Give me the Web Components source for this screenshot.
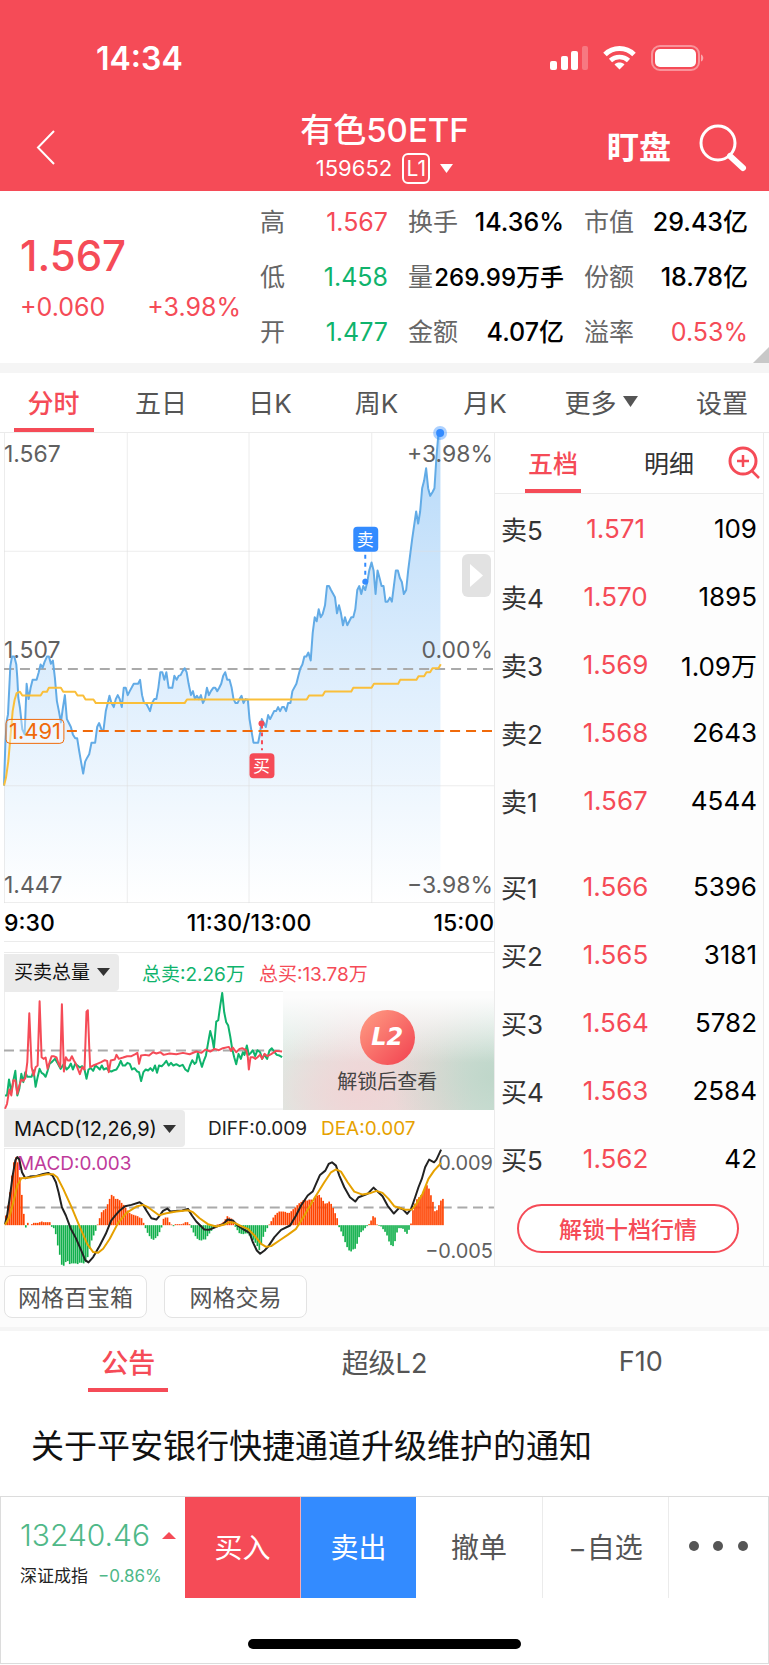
<!DOCTYPE html>
<html lang="zh-CN">
<head>
<meta charset="UTF-8">
<meta name="viewport" content="width=device-width, initial-scale=1.0">
<title>有色50ETF 159652</title>
<style>
    :root {
        --red: #f54b57;
        --green: #0fb36c;
        --blue: #338bff;
        --orange: #f06a0a;
        --line: #ebebeb;
        --gray: #555555;
        --text: #111111;
    }
    body {
        margin: 0;
        background: #ffffff;
        color: var(--text);
        font-family: Inter, "Noto Sans CJK SC", sans-serif;
    }
</style>
</head>
<body>
<stock-page></stock-page>

<script>
// Shared reset for every shadow root
const BASE = `
    * { box-sizing: border-box; }
    :host { display: block; }
    button { font: inherit; color: inherit; background: none; border: 0; padding: 0; margin: 0; cursor: pointer; white-space: nowrap; }
    a { color: inherit; text-decoration: none; }
    svg { display: block; }
`;

class BaseElement extends HTMLElement {
    connectedCallback() {
        if (this.shadowRoot) return;
        this.attachShadow({ mode: 'open' });
        this.shadowRoot.innerHTML = `<style>${BASE}${this.styles()}</style>${this.markup()}`;
    }
    styles() { return ''; }
    markup() { return '<slot></slot>'; }
}

/* ---------- status bar ---------- */
class StatusBar extends BaseElement {
    styles() {
        return `
            :host { display: flex; justify-content: space-between; align-items: center; height: 116px; padding: 0 65px 0 96px; }
            .time { font-size: 32px; font-weight: 600; }
            .icons { display: flex; align-items: center; gap: 15px; }
        `;
    }
    markup() {
        return `
            <span class="time">14:34</span>
            <div class="icons">
                <svg width="38" height="24" viewBox="0 0 38 24" fill="#fff" aria-hidden="true">
                    <rect x="0" y="15" width="7" height="9" rx="2"/>
                    <rect x="11" y="10" width="7" height="14" rx="2"/>
                    <rect x="21" y="5" width="7" height="19" rx="2"/>
                    <rect x="32" y="0" width="6" height="24" rx="2" opacity=".25"/>
                </svg>
                <svg width="33" height="24" viewBox="0 0 33 24" fill="none" stroke="#fff" aria-hidden="true">
                    <path d="M2 8.500C10 .6 23 .6 31 8.500" stroke-width="5"/>
                    <path d="M7.500 14.500C12.500 9.800 20.500 9.800 25.500 14.500" stroke-width="4.600"/>
                    <path d="M16.500 23.500L11.500 18.500C14.300 15.900 18.700 15.900 21.500 18.500Z" fill="#fff" stroke="none"/>
                </svg>
                <svg width="53" height="26" viewBox="0 0 53 26" aria-hidden="true">
                    <rect x="1" y="1" width="47" height="24" rx="8" fill="none" stroke="#fff" stroke-width="2" opacity=".4"/>
                    <rect x="4" y="4" width="41" height="18" rx="5" fill="#fff"/>
                    <path d="M50 9.500c3 1 3 6 0 7z" fill="#fff" opacity=".5"/>
                </svg>
            </div>
        `;
    }
}
customElements.define('status-bar', StatusBar);

/* ---------- title bar ---------- */
class TitleBar extends BaseElement {
    styles() {
        return `
            :host { display: grid; grid-template-columns: 1fr auto 1fr; height: 75px; padding: 0 22px; }
            .back { justify-self: start; align-self: start; padding: 14px; }
            .mid { text-align: center; }
            h1 { margin: -2px 0 0; font-size: 33px; line-height: 32px; font-weight: 500; }
            .code { display: flex; align-items: center; justify-content: center; gap: 10px; font-size: 22px; line-height: 32px; margin-top: 6px; }
            .level { border: 2px solid #fff; border-radius: 6px; width: 28px; height: 31px; line-height: 28px; font-size: 21px; }
            .tools { justify-self: end; display: flex; gap: 28px; align-items: start; }
            .watch { font-size: 32px; line-height: 32px; font-weight: 700; margin-top: 16px; }
            .find { margin-top: 8px; }
        `;
    }
    markup() {
        return `
            <button class="back" aria-label="返回">
                <svg width="20" height="35" viewBox="0 0 20 35" fill="none" stroke="#fff" stroke-width="2"><path d="M18 1L2 17.500L18 34"/></svg>
            </button>
            <div class="mid">
                <h1>有色50ETF</h1>
                <div class="code">
                    <span>159652</span><span class="level">L1</span>
                    <svg width="13" height="9" viewBox="0 0 13 9" fill="#fff" aria-hidden="true"><path d="M0 0h13L6.500 9z"/></svg>
                </div>
            </div>
            <div class="tools">
                <button class="watch">盯盘</button>
                <button class="find" aria-label="搜索">
                    <svg width="48" height="48" viewBox="0 0 48 48" fill="none" stroke="#fff">
                        <circle cx="19" cy="19" r="17" stroke-width="3"/>
                        <path d="M31 32L44 44" stroke-width="6" stroke-linecap="round"/>
                    </svg>
                </button>
            </div>
        `;
    }
}
customElements.define('title-bar', TitleBar);

/* ---------- quote summary ---------- */
class QuoteItem extends BaseElement {
    styles() {
        return `
            :host { display: flex; justify-content: space-between; align-items: center; white-space: nowrap; font-size: 25px; line-height: 55px; }
            .label { color: #666; }
            .value { font-weight: 500; color: #000; }
            :host([tone]) .value { font-weight: 400; }
            :host([tone="up"]) .value { color: var(--red); }
            :host([tone="down"]) .value { color: var(--green); }
            :host([compact]) .value { font-size: 24px; }
        `;
    }
    markup() {
        return `<span class="label">${this.getAttribute('label')}</span><span class="value"><slot></slot></span>`;
    }
}
customElements.define('quote-item', QuoteItem);

class QuotePanel extends BaseElement {
    styles() {
        return `
            :host { position: relative; display: grid; grid-template-columns: 221fr 488fr; column-gap: 19px; height: 172px; padding: 4px 21px 0 20px; color: var(--red); }
            .last { display: block; font-size: 42px; line-height: 48px; font-weight: 500; margin-top: 37px; }
            .diff { display: flex; justify-content: space-between; font-size: 25px; line-height: 30px; margin-top: 12px; }
            .items { display: grid; grid-template-columns: 128fr 156fr 164fr; column-gap: 20px; grid-template-rows: repeat(3, 55px); }
            .corner { position: absolute; right: 0; bottom: 0; border-style: solid; border-width: 0 0 16px 16px; border-color: transparent transparent #c8c8c8; }
        `;
    }
    markup() {
        return `
            <div>
                <strong class="last">1.567</strong>
                <div class="diff"><span>+0.060</span><span>+3.98%</span></div>
            </div>
            <div class="items">
                <quote-item label="高" tone="up">1.567</quote-item>
                <quote-item label="换手">14.36%</quote-item>
                <quote-item label="市值">29.43亿</quote-item>
                <quote-item label="低" tone="down">1.458</quote-item>
                <quote-item label="量" compact>269.99万手</quote-item>
                <quote-item label="份额">18.78亿</quote-item>
                <quote-item label="开" tone="down">1.477</quote-item>
                <quote-item label="金额">4.07亿</quote-item>
                <quote-item label="溢率" tone="up">0.53%</quote-item>
            </div>
            <i class="corner"></i>
        `;
    }
}
customElements.define('quote-panel', QuotePanel);

/* ---------- period tabs ---------- */
class PeriodTabs extends BaseElement {
    styles() {
        return `
            :host { display: grid; grid-template-columns: 107fr 108fr 110fr 103fr 114fr 118fr 109fr; height: 59px; font-size: 26px; color: var(--gray); }
            button { position: relative; height: 59px; padding-bottom: 2px; }
            .active { color: var(--red); font-weight: 500; }
            .active::after { content: ''; position: absolute; left: 14px; right: 13px; bottom: 0; height: 4px; background: var(--red); }
            .more { display: flex; align-items: center; justify-content: center; gap: 6px; }
            .last { text-align: right; padding-right: 21px; }
        `;
    }
    markup() {
        return `
            <button class="active">分时</button>
            <button>五日</button>
            <button>日K</button>
            <button>周K</button>
            <button>月K</button>
            <button class="more">更多<svg width="15" height="11" viewBox="0 0 15 11" fill="#555"><path d="M0 0h15L7.500 11z"/></svg></button>
            <button class="last">设置</button>
        `;
    }
}
customElements.define('period-tabs', PeriodTabs);

/* ---------- intraday price chart ---------- */
const PRICE = '12,1084 16,960 20,890 24,870 31,725 36,696 43,696 49,720 52,760 55,820 60,850 67,915 74,930 80,778 86,824 92,790 98,766 110,766 116,745 122,720 128,730 134,712 141,696 147,696 153,718 159,708 165,760 171,830 177,860 183,894 189,850 195,812 201,884 207,896 213,908 219,930 226,942 232,942 238,980 244,1015 250,1048 256,1012 262,1000 268,990 275,955 286,955 292,908 298,896 306,918 311,918 318,860 324,836 329,814 335,836 342,848 348,824 354,812 360,824 366,848 372,790 378,790 384,812 390,800 402,778 415,778 421,766 427,812 433,836 440,838 445,848 451,860 457,836 464,824 470,824 476,790 482,743 488,743 494,766 500,743 507,790 518,790 524,754 531,766 537,754 543,752 549,740 555,731 561,743 567,778 574,812 580,800 586,824 592,814 598,824 604,812 610,836 616,824 622,790 628,812 634,800 641,790 647,790 653,800 659,790 665,778 671,754 677,743 683,766 690,766 696,788 702,824 708,836 714,836 720,824 726,814 732,836 738,824 745,826 750,884 756,920 762,955 776,955 782,925 787,884 793,896 799,908 806,872 812,884 818,872 824,860 830,860 836,848 842,860 848,848 854,848 860,860 866,836 873,836 879,800 891,778 897,754 903,731 909,720 915,696 921,696 927,684 934,708 940,625 946,578 952,590 958,554 964,578 970,568 977,542 983,484 989,484 995,496 1007,518 1013,566 1019,542 1025,566 1031,602 1037,578 1044,602 1050,590 1056,578 1062,578 1068,554 1074,496 1080,484 1086,508 1092,484 1098,496 1104,472 1110,437 1117,413 1123,437 1129,508 1135,437 1141,460 1147,484 1153,484 1159,531 1165,531 1172,519 1178,531 1184,484 1190,437 1196,437 1202,460 1208,472 1214,508 1221,496 1227,437 1239,343 1251,260 1257,296 1263,260 1269,190 1275,167 1281,130 1287,190 1293,213 1300,202 1306,190 1312,96 1318,25 1324,25';
const AVERAGE = '12,1084 18,1060 25,1010 32,930 38,860 44,826 50,806 60,802 67,813 122,813 129,802 141,802 147,790 183,790 190,802 226,802 233,813 250,813 257,825 281,825 288,836 555,836 562,825 922,825 929,813 970,813 977,801 1056,801 1062,790 1117,790 1124,778 1197,778 1203,766 1252,766 1258,755 1275,755 1282,743 1293,743 1300,731 1318,731 1325,719';

class PriceChart extends BaseElement {
    styles() {
        return `
            :host { position: relative; }
            svg { width: 100%; overflow: visible; }
            text { font-size: 23px; fill: #606060; }
            .end { text-anchor: end; }
            .tag { font-size: 17px; fill: #fff; text-anchor: middle; }
            .cost { font-size: 22px; fill: var(--orange); }
            .expand { position: absolute; right: 3px; top: 121px; width: 29px; height: 43px; border-radius: 6px; background: #e2e2e2; }
            .expand svg { width: 13px; margin: 0 auto; }
            .axis { display: grid; grid-template-columns: 1fr auto 1fr; height: 39px; line-height: 40px; font-size: 23px; font-weight: 500; color: #000; border-bottom: 1px solid var(--line); }
            .axis span:last-child { text-align: right; }
        `;
    }
    markup() {
        return `
            <svg viewBox="0 0 491 471" role="img" aria-label="分时走势">
                <defs>
                    <linearGradient id="area" x1="0" y1="0" x2="0" y2="1">
                        <stop offset="0" stop-color="#b6d9f9"/>
                        <stop offset=".55" stop-color="#e0effd"/>
                        <stop offset=".8" stop-color="#f1f8fe"/>
                        <stop offset="1" stop-color="#ffffff"/>
                    </linearGradient>
                </defs>
                <svg width="491" height="471" viewBox="12 24 1473 1413" overflow="visible">
                    <polygon points="12,1437 ${PRICE} 1324,1437" fill="url(#area)"/>
                </svg>
                <path d="M.5 0V471M123.500 0V471M245.500 0V471M368.500 0V471M0 118.500H491M0 353.500H491M0 470.500H491" stroke="#ddd" stroke-opacity=".55" fill="none"/>
                <path d="M0 236.500H491" stroke="#aaa" stroke-width="2" stroke-dasharray="10 6"/>
                <text x="0" y="29">1.567</text>
                <text x="0" y="225">1.507</text>
                <text x="0" y="461">1.447</text>
                <svg width="491" height="471" viewBox="12 24 1473 1413" overflow="visible" fill="none" stroke-width="6" stroke-linejoin="round">
                    <polyline points="${PRICE}" stroke="#62abe6"/>
                    <polyline points="${AVERAGE}" stroke="#fabf3a"/>
                </svg>
                <path d="M63 298.500H491" stroke="var(--orange)" stroke-width="2" stroke-dasharray="10 6"/>
                <rect x="2" y="287" width="58" height="24" rx="4" fill="#fff" fill-opacity=".35" stroke="var(--orange)"/>
                <text class="cost" x="5" y="307">1.491</text>
                <text class="end" x="490" y="29">+3.98%</text>
                <text class="end" x="490" y="225">0.00%</text>
                <text class="end" x="490" y="461">−3.98%</text>
                <path d="M362 122V149" stroke="var(--blue)" stroke-width="2" stroke-dasharray="4 4"/>
                <circle cx="362" cy="149" r="3" fill="var(--blue)"/>
                <rect x="350" y="94" width="25" height="25" rx="4" fill="var(--blue)"/>
                <text class="tag" x="362" y="113">卖</text>
                <path d="M258.500 292V318" stroke="var(--red)" stroke-width="2" stroke-dasharray="4 4"/>
                <circle cx="258" cy="291" r="3" fill="var(--red)"/>
                <rect x="246" y="321" width="25" height="25" rx="4" fill="var(--red)"/>
                <text class="tag" x="258" y="340">买</text>
                <circle cx="437" cy="0" r="7" fill="var(--blue)" opacity=".4"/>
                <circle cx="437" cy="0" r="4" fill="var(--blue)"/>
            </svg>
            <button class="expand" aria-label="展开"><svg viewBox="0 0 13 23" fill="#fff"><path d="M0 0L13 11.500L0 23z"/></svg></button>
            <div class="axis"><span>9:30</span><span>11:30/13:00</span><span>15:00</span></div>
        `;
    }
}
customElements.define('price-chart', PriceChart);

/* ---------- indicator header: picker + values in the slot ---------- */
class IndicatorHead extends BaseElement {
    styles() {
        return `
            :host { display: flex; align-items: center; height: 39px; font-size: 19px; white-space: nowrap; border-bottom: 1px solid var(--line); }
            :host([first]) { height: 40px; border-top: 1px solid var(--line); }
            label { display: flex; align-items: center; gap: 6px; height: 37px; padding: 0 9px 0 10px; margin-right: 23px; background: #ebebeb; border-radius: 0 4px 4px 0; }
            select { appearance: none; font: inherit; color: #111; background: none; border: 0; padding: 0; margin: 0; outline: none; }
            :host([latin]) select { font-size: 20px; }
            ::slotted(span) { margin-right: 14px; }
        `;
    }
    markup() {
        const name = this.getAttribute('name');
        return `
            <label>
                <select aria-label="指标"><option>${name}</option></select>
                <svg width="13" height="8" viewBox="0 0 13 8" fill="#333"><path d="M0 0h13L6.500 8z"/></svg>
            </label>
            <slot></slot>
        `;
    }
}
customElements.define('indicator-head', IndicatorHead);

/* ---------- buy / sell volume ---------- */
const SELL = '15,440 21,440 27,392 34,430 40,395 46,366 52,440 58,420 64,375 70,400 76,370 82,384 95,384 101,365 107,414 113,385 119,360 125,372 131,376 137,384 143,366 149,345 155,340 165,330 174,345 182,360 192,345 200,362 207,355 213,344 219,362 226,345 233,350 240,356 247,352 254,362 260,390 266,362 273,358 280,366 287,350 294,356 300,362 306,350 312,362 320,358 327,366 335,368 343,364 350,362 357,350 363,336 369,350 376,350 383,342 390,345 397,362 404,358 412,368 418,370 424,397 431,370 438,362 445,365 452,358 459,366 466,350 472,372 478,350 486,352 493,345 500,336 507,350 514,342 521,350 530,346 540,352 549,348 557,362 565,368 571,350 578,334 585,345 590,340 595,312 601,334 607,354 613,335 619,320 625,285 632,246 638,270 643,298 650,218 656,214 662,170 668,132 674,190 680,220 686,230 692,262 698,300 704,325 710,346 717,315 724,330 730,310 735,318 742,290 748,318 754,312 760,304 767,322 774,304 782,310 788,330 795,318 803,330 810,305 817,298 824,308 832,318 840,320 848,325';
const BUY = '15,480 21,465 28,422 34,440 40,394 46,395 52,435 58,410 64,392 70,396 76,388 82,340 88,193 95,355 101,380 107,355 113,350 119,157 125,325 131,330 137,326 143,360 149,340 155,322 161,322 170,326 176,345 181,355 186,166 192,368 198,325 204,335 210,335 216,322 222,335 228,345 234,360 240,376 247,355 254,362 260,188 264,184 268,290 271,355 280,350 292,345 304,340 315,334 322,336 327,370 333,335 345,332 350,318 357,330 370,326 382,322 395,322 407,316 413,312 418,345 424,320 436,318 448,320 460,310 470,314 482,310 492,318 510,314 530,316 550,312 570,316 590,308 605,312 618,302 632,308 645,300 658,304 670,298 688,294 695,306 700,296 710,310 720,300 728,298 740,304 745,325 748,362 753,325 760,325 768,330 774,325 782,318 788,330 795,315 804,322 815,316 830,306 848,308';

class VolumeChart extends BaseElement {
    styles() {
        return `
            :host { margin-top: 10px; }
            .up { color: var(--red); }
            .down { color: var(--green); }
            .plot { position: relative; }
            .plot > svg { width: 100%; }
            .lock {
                position: absolute; right: 0; top: -1px; bottom: 0; width: 43%;
                display: flex; flex-direction: column; align-items: center; padding: 19px 3px 0 0; gap: 2px;
                font-size: 20px; line-height: 30px; color: #444;
                background:
                    linear-gradient(180deg, #fcfcfc 5%, rgba(252,252,252,0) 60%),
                    radial-gradient(ellipse 50% 70% at 100% 72%, rgba(190,214,201,.95), rgba(200,220,210,0)),
                    radial-gradient(ellipse 55% 60% at 35% 85%, rgba(240,212,213,.9), rgba(242,212,212,0)),
                    linear-gradient(90deg, #dcebe4, #ecdcdc 35%, #e2dcd8 75%, #cfe2d8);
            }
            .badge { width: 55px; height: 55px; border-radius: 50%; background: linear-gradient(135deg, #ff9f85, #f2404f); color: #fff; font: italic 700 24px/55px "DejaVu Sans", sans-serif; text-align: center; }
        `;
    }
    markup() {
        return `
            <indicator-head first name="买卖总量"><span class="down">总卖:2.26万</span><span class="up">总买:13.78万</span></indicator-head>
            <div class="plot">
                <svg viewBox="12 129 1473 354" fill="none" stroke-width="6" stroke-linejoin="round" role="img" aria-label="买卖总量">
                    <path d="M13 129V483M12 481H1485" stroke="#ebebeb" stroke-width="3"/>
                    <path d="M12 305H1485" stroke="#aaa" stroke-dasharray="30 17"/>
                    <polyline points="${SELL}" stroke="#0fb36c"/>
                    <polyline points="${BUY}" stroke="#f54b57"/>
                </svg>
                <button class="lock"><span class="badge">L2</span><span>解锁后查看</span></button>
            </div>
        `;
    }
}
customElements.define('volume-chart', VolumeChart);

/* ---------- MACD ---------- */
// one bar per sample: above zero is red, below is green
const MACD = [29,59,99,149,189,204,189,144,91,34,-7,7,0,3,7,7,7,9,11,9,9,9,9,-5,-9,-27,-61,-89,-119,-123,-111,-108,-117,-115,-115,-115,-117,-113,-113,-115,-111,-96,-71,-46,-31,-17,2,21,39,45,49,63,79,91,87,79,79,75,67,61,53,44,37,33,31,29,27,23,21,7,-9,-23,-33,-41,-44,-39,-33,-21,-7,19,23,23,9,2,-3,3,3,3,3,5,9,9,3,-8,-22,-33,-41,-45,-46,-43,-43,-33,-25,-17,-9,-3,2,3,5,10,18,27,23,20,11,-5,-15,-24,-26,-27,-25,-25,-31,-38,-44,-53,-63,-75,-58,-35,-20,-9,2,12,23,31,37,41,41,41,40,37,37,42,48,53,60,66,70,75,79,74,77,77,70,83,89,91,83,73,65,66,71,64,52,36,21,-6,-19,-33,-51,-66,-76,-79,-73,-71,-56,-36,-21,-16,-9,-3,3,14,27,23,2,-2,-4,-12,-20,-31,-49,-60,-63,-48,-22,-9,-9,-11,-20,-26,-14,5,45,65,78,84,90,100,112,120,110,90,70,42,45,60,74,79];
const DIFF = '15,826 22,795 30,740 38,680 46,634 52,624 58,632 66,670 76,688 90,683 110,681 130,675 145,672 158,680 168,700 176,730 186,775 198,800 212,838 228,868 244,905 256,934 266,941 280,925 300,890 318,855 334,815 348,798 360,785 376,772 395,768 420,760 430,768 440,785 455,808 470,812 480,800 490,786 503,779 512,788 530,786 548,785 565,780 577,800 590,818 602,830 614,842 628,843 650,834 672,825 684,812 700,815 714,830 732,842 750,852 760,880 772,905 782,915 795,905 805,895 825,865 845,843 872,830 890,800 905,770 925,740 940,728 950,705 962,678 978,665 988,645 998,640 1010,650 1020,680 1035,715 1052,745 1068,758 1078,745 1105,735 1123,716 1135,728 1150,742 1165,770 1184,794 1200,777 1212,782 1224,795 1236,780 1248,745 1258,715 1268,690 1278,655 1290,632 1305,640 1312,632 1326,602';
const DEA = '15,828 28,805 40,760 52,710 64,688 90,686 115,681 140,676 160,676 172,685 190,720 215,775 240,835 262,885 280,910 295,912 310,900 330,870 355,822 380,792 410,773 430,768 445,775 478,799 500,793 530,788 565,784 580,790 600,808 625,826 650,833 672,828 690,820 705,822 725,832 745,840 765,860 785,885 800,894 815,892 840,875 865,858 890,840 915,800 945,748 975,700 995,670 1010,661 1025,668 1045,700 1065,728 1090,737 1115,732 1132,726 1150,732 1168,750 1185,772 1205,778 1220,783 1238,782 1252,765 1270,735 1288,690 1305,665 1326,642';

class MacdChart extends BaseElement {
    styles() {
        return `
            .plot { width: 100%; }
            text { font-size: 20px; fill: #606060; text-anchor: end; }
            .macd { font-size: 19px; fill: #bf3b9b; text-anchor: start; }
            .diff { color: #222; }
            .dea { color: #e6a100; }
        `;
    }
    bars() {
        return MACD.map((v, i) => {
            if (!v) return '';
            const y = v > 0 ? 829 - v : 829;
            return `<rect x="${15 + i * 6}" y="${y}" width="5" height="${Math.abs(v)}" fill="${v > 0 ? '#ff4300' : '#12b04c'}"/>`;
        }).join('');
    }
    markup() {
        return `
            <indicator-head latin name="MACD(12,26,9)"><span class="diff">DIFF:0.009</span><span class="dea">DEA:0.007</span></indicator-head>
            <svg class="plot" viewBox="0 0 491 117" role="img" aria-label="MACD">
                <svg width="491" height="117" viewBox="12 600 1473 351" fill="none" stroke-linejoin="round">
                    <path d="M13 600V951" stroke="#ebebeb" stroke-width="3"/>
                    <path d="M12 776H1485" stroke="#aaa" stroke-width="6" stroke-dasharray="30 17"/>
                    ${this.bars()}
                </svg>
                <text class="macd" x="13" y="21">MACD:0.003</text>
                <text x="490" y="21">0.009</text>
                <text x="490" y="109">−0.005</text>
                <svg width="491" height="117" viewBox="12 600 1473 351" fill="none" stroke-width="6" stroke-linejoin="round">
                    <polyline points="${DIFF}" stroke="#222"/>
                    <polyline points="${DEA}" stroke="#e6a100"/>
                </svg>
            </svg>
        `;
    }
}
customElements.define('macd-chart', MacdChart);

/* ---------- order book ---------- */
class OrderBook extends BaseElement {
    styles() {
        return `
            :host { display: flex; flex-direction: column; background: #fdfdfd; border: 1px solid var(--line); border-width: 0 1px; }
            .head { display: grid; grid-template-columns: 116fr 116fr 36fr; height: 61px; border-bottom: 1px solid var(--line); font-size: 25px; color: #333; background: #fff; }
            .head button { position: relative; padding-bottom: 2px; }
            .head .active { color: var(--red); font-weight: 500; }
            .head .active::after { content: ''; position: absolute; left: 50%; bottom: 0; width: 56px; margin-left: -28px; height: 4px; background: var(--red); }
            table { width: 100%; border-collapse: collapse; font-size: 26px; table-layout: fixed; }
            tr { height: 68px; }
            th, td { padding: 0; font-weight: 400; vertical-align: middle; }
            th { text-align: left; padding-left: 6px; color: #333; width: 28%; }
            .price { text-align: center; color: var(--red); width: 34%; }
            .vol { text-align: right; padding-right: 6px; color: #000; }
            tbody + tbody::before { content: ''; display: block; height: 18px; }
            .unlock { margin: 12px 24px 13px 22px; height: 49px; padding-bottom: 2px; border: 2px solid var(--red); border-radius: 25px; color: var(--red); font-size: 23px; font-weight: 500; background: #fff; }
        `;
    }
    row([name, price, vol]) {
        return `<tr><th scope="row">${name}</th><td class="price">${price}</td><td class="vol">${vol}</td></tr>`;
    }
    markup() {
        const asks = [['卖5', '1.571', '109'], ['卖4', '1.570', '1895'], ['卖3', '1.569', '1.09万'], ['卖2', '1.568', '2643'], ['卖1', '1.567', '4544']];
        const bids = [['买1', '1.566', '5396'], ['买2', '1.565', '3181'], ['买3', '1.564', '5782'], ['买4', '1.563', '2584'], ['买5', '1.562', '42']];
        return `
            <div class="head">
                <button class="active">五档</button>
                <button>明细</button>
                <button aria-label="放大">
                    <svg width="33" height="34" viewBox="0 0 33 34" fill="none" stroke="var(--red)" stroke-width="3">
                        <circle cx="16" cy="16" r="13"/>
                        <path d="M10 16h12M16 10v12M25 26l7 7" stroke-width="2.500"/>
                    </svg>
                </button>
            </div>
            <table>
                <tbody>${asks.map(this.row).join('')}</tbody>
                <tbody>${bids.map(this.row).join('')}</tbody>
            </table>
            <button class="unlock">解锁十档行情</button>
        `;
    }
}
customElements.define('order-book', OrderBook);

/* ---------- grid tools ---------- */
class GridTools extends BaseElement {
    styles() {
        return `
            :host { display: flex; gap: 17px; padding: 8px 4px 9px; background: #fcfcfc; border-top: 1px solid var(--line); border-bottom: 4px solid #f5f5f5; }
            button { width: 143px; height: 43px; padding-bottom: 2px; border: 1px solid #e3e3e3; border-radius: 8px; background: #fff; font-size: 23px; color: var(--gray); }
        `;
    }
    markup() {
        return `<button>网格百宝箱</button><button>网格交易</button>`;
    }
}
customElements.define('grid-tools', GridTools);

/* ---------- news ---------- */
class NewsSection extends BaseElement {
    styles() {
        return `
            nav { display: grid; grid-template-columns: repeat(3, 1fr); font-size: 27px; color: var(--gray); }
            button { position: relative; height: 61px; }
            .active { color: var(--red); font-weight: 500; }
            .active::after { content: ''; position: absolute; left: 50%; bottom: 0; width: 80px; margin-left: -40px; height: 4px; background: var(--red); }
            a { display: block; padding: 32px 31px 28px; font-size: 33px; line-height: 44px; }
        `;
    }
    markup() {
        return `
            <nav><button class="active">公告</button><button>超级L2</button><button>F10</button></nav>
            <a href="#notice">关于平安银行快捷通道升级维护的通知</a>
        `;
    }
}
customElements.define('news-section', NewsSection);

/* ---------- bottom trade bar ---------- */
class TradeBar extends BaseElement {
    styles() {
        return `
            :host { border: 1px solid #dcdcdc; background: #fff; }
            .bar { display: grid; grid-template-columns: 184fr 116fr 115fr 127fr 126fr 99fr; height: 101px; font-size: 28px; color: var(--gray); }
            .bar button { padding-bottom: 4px; }
            .index { padding: 19px 0 0 19px; white-space: nowrap; color: #4fb888; }
            .point { display: flex; gap: 12px; align-items: center; font-size: 30px; line-height: 38px; font-weight: 300; }
            .name { display: flex; gap: 10px; font-size: 17px; line-height: 26px; margin-top: 9px; }
            .name b { font-weight: 400; color: #222; }
            .buy { background: var(--red); color: #fff; border-right: 1px solid #fff8; }
            .sell { background: var(--blue); color: #fff; }
            .cell { border-right: 1px solid var(--line); }
            .dots svg { margin: 0 auto; }
            .home { width: 273px; height: 10px; border-radius: 5px; background: #000; margin: 41px auto 14px; }
        `;
    }
    markup() {
        return `
            <div class="bar">
                <div class="index">
                    <div class="point">13240.46<svg width="14" height="7" viewBox="0 0 14 7" fill="#f54b57"><path d="M0 7h14L7 0z"/></svg></div>
                    <div class="name"><b>深证成指</b><span>−0.86%</span></div>
                </div>
                <button class="buy">买入</button>
                <button class="sell">卖出</button>
                <button class="cell">撤单</button>
                <button class="cell">−自选</button>
                <button class="dots" aria-label="更多操作">
                    <svg width="59" height="10" viewBox="0 0 59 10" fill="#555"><circle cx="5" cy="5" r="5"/><circle cx="29" cy="5" r="5"/><circle cx="54" cy="5" r="5"/></svg>
                </button>
            </div>
            <div class="home"></div>
        `;
    }
}
customElements.define('trade-bar', TradeBar);

/* ---------- page ---------- */
class StockPage extends BaseElement {
    styles() {
        return `
            header { background: var(--red); color: #fff; }
            .gap { height: 10px; background: #f5f5f5; }
            .market { display: grid; grid-template-columns: 490fr 270fr; padding: 0 5px 0 4px; border-top: 1px solid var(--line); }
            .back { align-self: start; }
        `;
    }
    markup() {
        return `
            <header><status-bar></status-bar><title-bar></title-bar></header>
            <main>
                <quote-panel></quote-panel>
                <div class="gap"></div>
                <period-tabs></period-tabs>
                <section class="market">
                    <div>
                        <price-chart></price-chart>
                        <volume-chart></volume-chart>
                        <macd-chart></macd-chart>
                    </div>
                    <order-book></order-book>
                </section>
                <grid-tools></grid-tools>
                <news-section></news-section>
            </main>
            <trade-bar></trade-bar>
        `;
    }
}
customElements.define('stock-page', StockPage);
</script>
</body>
</html>
